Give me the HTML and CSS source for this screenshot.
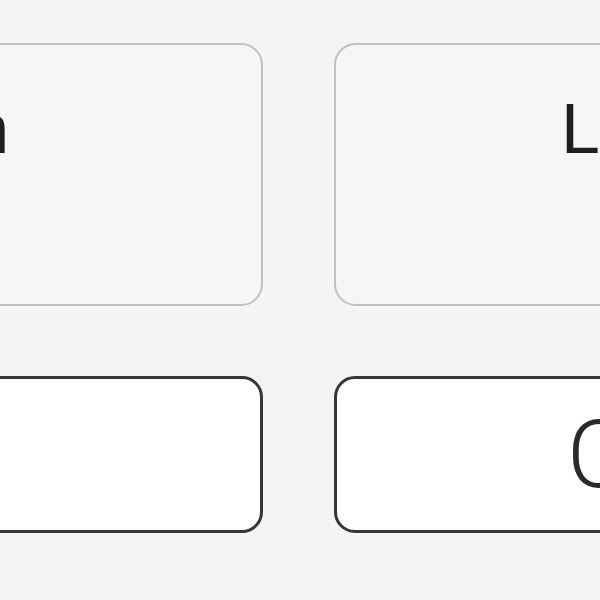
FILE: index.html
```html
<!DOCTYPE html>
<html lang="en">
<head>
    <meta charset="UTF-8">
    <meta name="viewport" content="width=device-width, initial-scale=1.0">
    <title>Tiles</title>
    <link rel="stylesheet" href="styles.css">
</head>
<body>
    <main class="board">
        <div class="tile">Sign</div>
        <div class="tile">Login</div>
        <button class="key">+</button>
        <button class="key">Clear</button>
    </main>
</body>
</html>
```

FILE: styles.css
```css
/* Base */
* {
    margin: 0;
    padding: 0;
    box-sizing: border-box;
}

body {
    font-family: 'Liberation Sans', Arial, sans-serif;
    background: #f4f4f4;
    color: #222;
    overflow: hidden;
}

/* Board */
.board {
    display: grid;
    grid-template-columns: 618px 618px;
    grid-template-rows: 263px 157px;
    column-gap: 71px;
    row-gap: 70px;
    margin: 43px 0 0 -355px;
    width: 1307px;
}

.tile {
    background: #f6f6f6;
    border: 2px solid #c0c0c0;
    border-radius: 22px;
    padding: 49px 0 0 225px;
    font-size: 70px;
    line-height: 70px;
    color: #1e1e1e;
    letter-spacing: -1px;
    white-space: nowrap;
}

.key {
    display: flex;
    align-items: center;
    background: #fff;
    border: 3px solid #363636;
    border-radius: 21px;
    padding: 0 0 0 230px;
    font-family: Roboto, sans-serif;
    font-weight: 300;
    font-size: 94px;
    line-height: 1;
    color: #2a2a2a;
    white-space: nowrap;
}
```
